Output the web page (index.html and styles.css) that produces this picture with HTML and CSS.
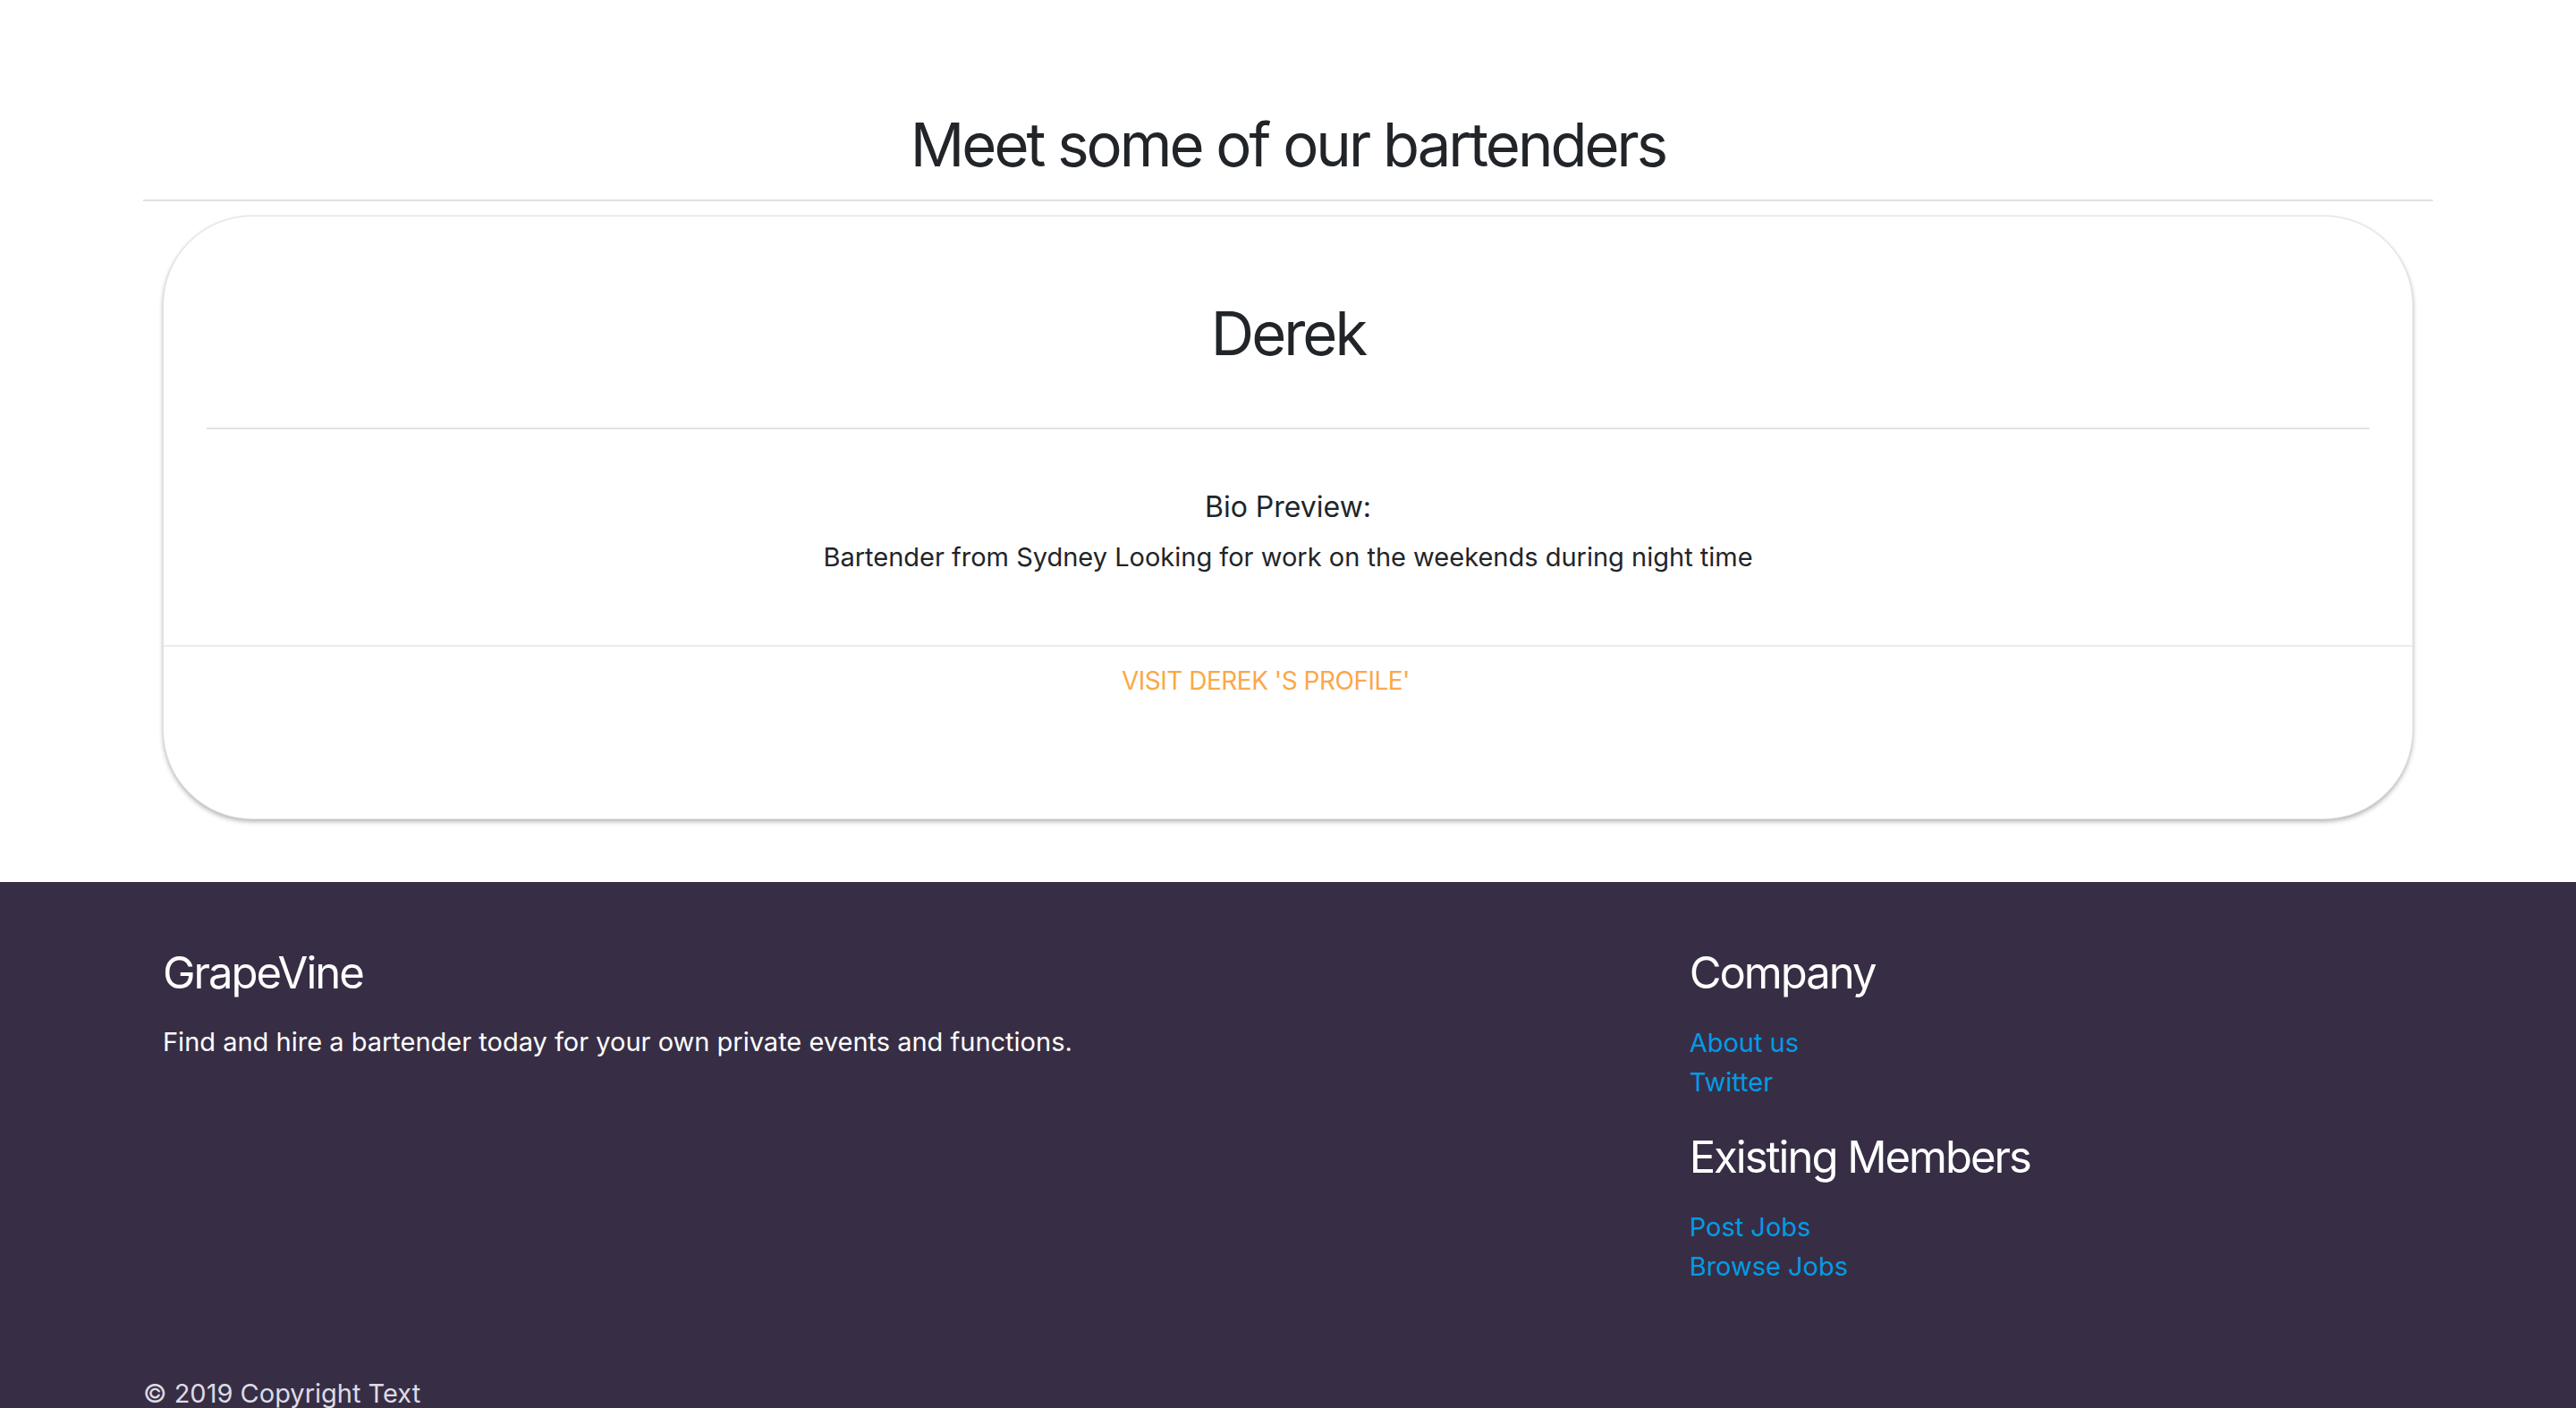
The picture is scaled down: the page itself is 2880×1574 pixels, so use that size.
FILE: index.html
```html
<!DOCTYPE html>
<html lang="en">
<head>
<meta charset="utf-8">
<title>GrapeVine - Bartenders</title>
<link rel="stylesheet" href="styles.css">
</head>
<body>
<section class="bartenders">
  <div class="container">
    <h2 class="section-title">Meet some of our bartenders</h2>
    <hr class="section-rule">
    <div class="row">
      <div class="col-full">
        <div class="card">
          <div class="card-body">
            <h3 class="card-name">Derek</h3>
            <hr class="card-rule">
            <h5 class="bio-title">Bio Preview:</h5>
            <p class="bio-text">Bartender from Sydney Looking for work on the weekends during night time</p>
          </div>
          <div class="card-footer">
            <a class="profile-link" href="#">VISIT DEREK 'S PROFILE'</a>
          </div>
        </div>
      </div>
    </div>
  </div>
</section>
<footer class="site-footer">
  <div class="container">
    <div class="footer-row">
      <div class="footer-col">
        <h4 class="footer-heading">GrapeVine</h4>
        <p class="footer-text">Find and hire a bartender today for your own private events and functions.</p>
      </div>
      <div class="footer-col">
        <h4 class="footer-heading">Company</h4>
        <ul class="footer-links">
          <li><a href="#">About us</a></li>
          <li><a href="#">Twitter</a></li>
        </ul>
        <h4 class="footer-heading footer-heading-second">Existing Members</h4>
        <ul class="footer-links">
          <li><a href="#">Post Jobs</a></li>
          <li><a href="#">Browse Jobs</a></li>
        </ul>
      </div>
    </div>
    <div class="copyright">© 2019 Copyright Text</div>
  </div>
</footer>
</body>
</html>
```

FILE: styles.css
```css
html, body {
  margin: 0;
  padding: 0;
  background: #ffffff;
}

body {
  font-family: Inter, "Noto Sans", "Liberation Sans", sans-serif;
  font-size: 29px;
  line-height: 42px;
  color: #212529;
}

.container {
  width: 2560px;
  margin: 0 auto;
}

.bartenders {
  padding-top: 122px;
  padding-bottom: 70px;
}

.section-title {
  margin: 0;
  font-size: 67px;
  line-height: 80px;
  font-weight: 400;
  letter-spacing: -3px;
  text-align: center;
  color: #212529;
}

.section-rule {
  margin: 21px 0 0;
  border: 0;
  border-top: 2px solid #e0e0e0;
  height: 0;
}

.row {
  display: flex;
}

.col-full {
  flex: 1;
  padding: 0 22px;
}

.card {
  margin-top: 16px;
  background: #ffffff;
  border: 1px solid #e3e3e3;
  border-radius: 100px;
  box-shadow: 0 3px 5px rgba(0, 0, 0, 0.26), 0 0 3px rgba(0, 0, 0, 0.06);
  overflow: hidden;
}

.card-body {
  padding: 91px 48px 77px;
  text-align: center;
}

.card-name {
  margin: 0;
  font-size: 67px;
  line-height: 80px;
  font-weight: 400;
  letter-spacing: -3px;
  color: #212529;
}

.card-rule {
  margin: 65px 0 0;
  border: 0;
  border-top: 2px solid #e2e2e2;
  height: 0;
}

.bio-title {
  margin: 68px 0 17px;
  font-size: 32px;
  line-height: 37px;
  font-weight: 400;
  color: #212529;
}

.bio-text {
  margin: 0;
  font-size: 29px;
  line-height: 42px;
}

.card-footer {
  border-top: 2px solid #ececec;
  padding: 17px 0 133px;
  text-align: center;
}

.profile-link {
  display: inline-block;
  margin-right: 50px;
  color: #fba846;
  text-decoration: none;
  font-size: 28px;
  line-height: 42px;
  letter-spacing: -0.5px;
}

.site-footer {
  background: #372e45;
  color: #ffffff;
  padding-top: 72px;
}

.footer-row {
  display: grid;
  grid-template-columns: 2fr 1fr;
}

.footer-col {
  padding: 0 22px;
}

.footer-heading {
  margin: 0 0 27px;
  font-size: 49px;
  line-height: 59px;
  font-weight: 400;
  letter-spacing: -2px;
  color: #ffffff;
}

.footer-heading-second {
  margin-top: 32px;
}

.footer-text {
  margin: 0;
  font-size: 29px;
  line-height: 42px;
  color: #ffffff;
}

.footer-links {
  list-style: none;
  margin: 0;
  padding: 0;
}

.footer-links li {
  font-size: 29px;
  line-height: 44px;
}

.footer-links a {
  color: #039be5;
  text-decoration: none;
}

.copyright {
  margin-top: 99px;
  padding-bottom: 20px;
  font-size: 29px;
  line-height: 42px;
  color: #dedbe3;
}
```
